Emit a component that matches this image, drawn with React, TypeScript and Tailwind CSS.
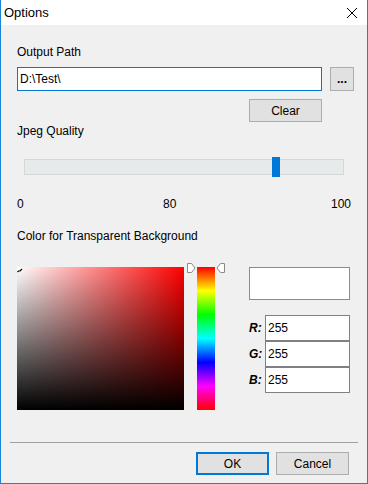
export default function App() {
  return (
    <div className="relative flex h-[484px] w-[368px] flex-col overflow-hidden border-x border-b border-[#1883d7] bg-[#f0f0f0] font-['Liberation_Sans',Arial,sans-serif] text-[12px] leading-[14px] text-black">
      {/* title bar */}
      <div className="flex h-[25px] shrink-0 items-center justify-between bg-white pl-[3px] pr-[9px]">
        <span className="text-[13px]">Options</span>
        <svg width="12" height="12" viewBox="0 0 12 12">
          <path d="M1 1 L11 11 M11 1 L1 11" stroke="#000" strokeWidth="1" />
        </svg>
      </div>

      <div className="flex flex-col pl-4">
        <div className="mt-[20px]">Output Path</div>
        <div className="mt-[8px] flex gap-[8px]">
          <div className="flex h-[24px] w-[305px] items-center border border-[#0078d7] bg-white pl-[2px]">
            D:\Test\
          </div>
          <button className="flex h-[24px] w-[24px] items-end justify-center border border-[#adadad] bg-[#e1e1e1] pb-[4px] font-bold">
            ...
          </button>
        </div>
        <div className="mt-[8px] flex w-[305px] justify-end">
          <button className="h-[23px] w-[73px] border border-[#adadad] bg-[#e1e1e1]">Clear</button>
        </div>

        <div className="mt-[2px]">Jpeg Quality</div>
        <div className="relative ml-[7px] mt-[19px] h-[20px] w-[320px]">
          <div className="mt-[2px] h-[16px] w-full border border-[#d6d6d6] bg-[#e7eaea]" />
          <div className="absolute left-[248px] top-0 h-[20px] w-[8px] bg-[#0078d7]" />
        </div>

        <div className="mt-[20px] flex w-[334px]">
          <span className="w-[146px]">0</span>
          <span>80</span>
          <span className="flex-1 text-right">100</span>
        </div>

        <div className="mt-[18px]">Color for Transparent Background</div>

        <div className="mt-[24px] flex">
          <div className="relative h-[143px] w-[167px] bg-[#ff0000]">
            <div className="h-full w-full bg-linear-to-r from-white to-transparent">
              <div className="h-full w-full bg-linear-to-b from-transparent to-black" />
            </div>
            <svg className="absolute left-0 top-0" width="6" height="6" viewBox="0 0 6 6">
              <path d="M0.5 5 L1.5 4 L3 4 L5 2" stroke="#000" strokeWidth="1.2" fill="none" />
            </svg>
          </div>

          <div className="relative ml-[13px] h-[143px] w-[18px] bg-[linear-gradient(to_bottom,#ff0000,#ffff00,#00ff00,#00ffff,#0000ff,#ff00ff,#ff0000)]">
            <svg className="absolute -left-[10px] -top-[4px]" width="9" height="10" viewBox="0 0 9 10">
              <path d="M0.5 0.5 L4.5 0.5 L8 5 L4.5 9.5 L0.5 9.5 Z" fill="#fff" stroke="#8a8a8a" />
            </svg>
            <svg className="absolute -right-[10px] -top-[4px]" width="9" height="10" viewBox="0 0 9 10">
              <path d="M8.5 0.5 L4.5 0.5 L1 5 L4.5 9.5 L8.5 9.5 Z" fill="#fff" stroke="#8a8a8a" />
            </svg>
          </div>

          <div className="ml-[34px] flex flex-col">
            <div className="h-[33px] w-[101px] border border-[#7a8ea8] bg-white" />
            <div className="mt-[15px] flex flex-col">
              {["R", "G", "B"].map((c) => (
                <div key={c} className="flex items-center">
                  <span className="w-[16px] font-bold italic">{c}:</span>
                  <div className="flex h-[26px] w-[85px] items-center border border-[#808080] bg-white pl-[2px]">
                    255
                  </div>
                </div>
              ))}
            </div>
          </div>
        </div>
      </div>

      <div className="ml-[9px] mr-[9px] mt-[32px] h-[1px] bg-[#a0a0a0]" />

      <div className="mt-[9px] flex justify-end gap-[7px] pr-[18px]">
        <button className="h-[23px] w-[73px] border-2 border-[#0078d7] bg-[#e1e1e1]">OK</button>
        <button className="h-[23px] w-[73px] border border-[#adadad] bg-[#e1e1e1]">Cancel</button>
      </div>
    </div>
  );
}
